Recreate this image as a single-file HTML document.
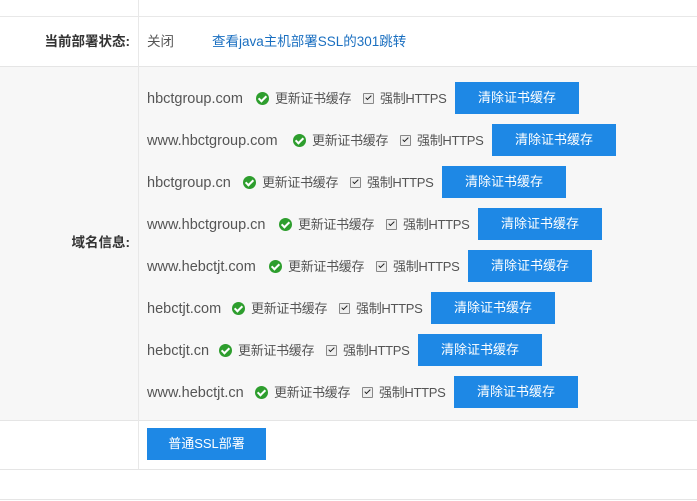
<!DOCTYPE html>
<html><head><meta charset="utf-8"><style>
body{margin:0;width:697px;height:501px;background:#fff;font-family:"Liberation Sans","Noto Sans CJK SC",sans-serif;font-size:14px;color:#555;position:relative;overflow:hidden}
.a{position:absolute}
.lab{position:absolute;left:0;width:130px;text-align:right;font-weight:bold;color:#333;font-size:13.5px;line-height:20px}
.row{position:absolute;left:147px;height:32px;display:flex;align-items:center;white-space:nowrap}
.row span{line-height:20px;height:20px}
.d{display:inline-block;font-size:14.5px;position:relative;top:1px}
.ic{width:13px;height:13px!important;border-radius:50%;background:#2e9e2e;display:inline-block;position:relative}
.ic:after{content:"";position:absolute;left:4px;top:2px;width:3px;height:6px;border:solid #fff;border-width:0 2px 2px 0;transform:rotate(45deg)}
.t1{display:inline-block;width:82px;margin-left:6px;font-size:13px;letter-spacing:-0.3px;position:relative;top:1px}
.cb{display:inline-block;width:9px;height:9px!important;border:1px solid #888;background:#eee;margin-left:6px;position:relative;border-radius:1px}
.cb:after{content:"";position:absolute;left:3px;top:0px;width:2px;height:5px;border:solid #222;border-width:0 1.5px 1.5px 0;transform:rotate(45deg)}
.t2{display:inline-block;width:72px;margin-left:6px;font-size:13px;letter-spacing:-0.3px;position:relative;top:1px}
.row .btn{display:inline-block;width:124px;height:32px;line-height:32px;background:#1e88e5;color:#fff;text-align:center;margin-left:3px;font-size:13px}
</style></head><body>
<div class="a" style="left:0;top:16px;width:697px;height:1px;background:#e8e8e8"></div>
<div class="a" style="left:0;top:66px;width:697px;height:353px;background:#f7f7f7;border-top:1px solid #e5e5e5;border-bottom:1px solid #e5e5e5"></div>
<div class="a" style="left:138px;top:0;width:1px;height:469px;background:#e8e8e8"></div>
<div class="a" style="left:0;top:469px;width:697px;height:1px;background:#e5e5e5"></div>
<div class="a" style="left:0;top:499px;width:697px;height:1px;background:#e5e5e5"></div>
<div class="lab" style="top:32px">当前部署状态:</div>
<div class="a" style="left:147px;top:32px;font-size:13.5px;line-height:20px">关闭</div>
<div class="a" style="left:212px;top:32px;font-size:13.5px;line-height:20px;color:#1a6fc0">查看java主机部署SSL的301跳转</div>
<div class="lab" style="top:233px">域名信息:</div>

<div class="row" style="top:82px"><span class="d" style="width:109px">hbctgroup.com</span><span class="ic"></span><span class="t1">更新证书缓存</span><span class="cb"></span><span class="t2">强制HTTPS</span><span class="btn">清除证书缓存</span></div>
<div class="row" style="top:124px"><span class="d" style="width:146px">www.hbctgroup.com</span><span class="ic"></span><span class="t1">更新证书缓存</span><span class="cb"></span><span class="t2">强制HTTPS</span><span class="btn">清除证书缓存</span></div>
<div class="row" style="top:166px"><span class="d" style="width:96px">hbctgroup.cn</span><span class="ic"></span><span class="t1">更新证书缓存</span><span class="cb"></span><span class="t2">强制HTTPS</span><span class="btn">清除证书缓存</span></div>
<div class="row" style="top:208px"><span class="d" style="width:132px">www.hbctgroup.cn</span><span class="ic"></span><span class="t1">更新证书缓存</span><span class="cb"></span><span class="t2">强制HTTPS</span><span class="btn">清除证书缓存</span></div>
<div class="row" style="top:250px"><span class="d" style="width:122px">www.hebctjt.com</span><span class="ic"></span><span class="t1">更新证书缓存</span><span class="cb"></span><span class="t2">强制HTTPS</span><span class="btn">清除证书缓存</span></div>
<div class="row" style="top:292px"><span class="d" style="width:85px">hebctjt.com</span><span class="ic"></span><span class="t1">更新证书缓存</span><span class="cb"></span><span class="t2">强制HTTPS</span><span class="btn">清除证书缓存</span></div>
<div class="row" style="top:334px"><span class="d" style="width:72px">hebctjt.cn</span><span class="ic"></span><span class="t1">更新证书缓存</span><span class="cb"></span><span class="t2">强制HTTPS</span><span class="btn">清除证书缓存</span></div>
<div class="row" style="top:376px"><span class="d" style="width:108px">www.hebctjt.cn</span><span class="ic"></span><span class="t1">更新证书缓存</span><span class="cb"></span><span class="t2">强制HTTPS</span><span class="btn">清除证书缓存</span></div>

<div class="a" style="left:147px;top:428px;width:119px;height:32px;line-height:32px;background:#1e88e5;color:#fff;text-align:center;font-size:13px">普通SSL部署</div>
</body></html>
